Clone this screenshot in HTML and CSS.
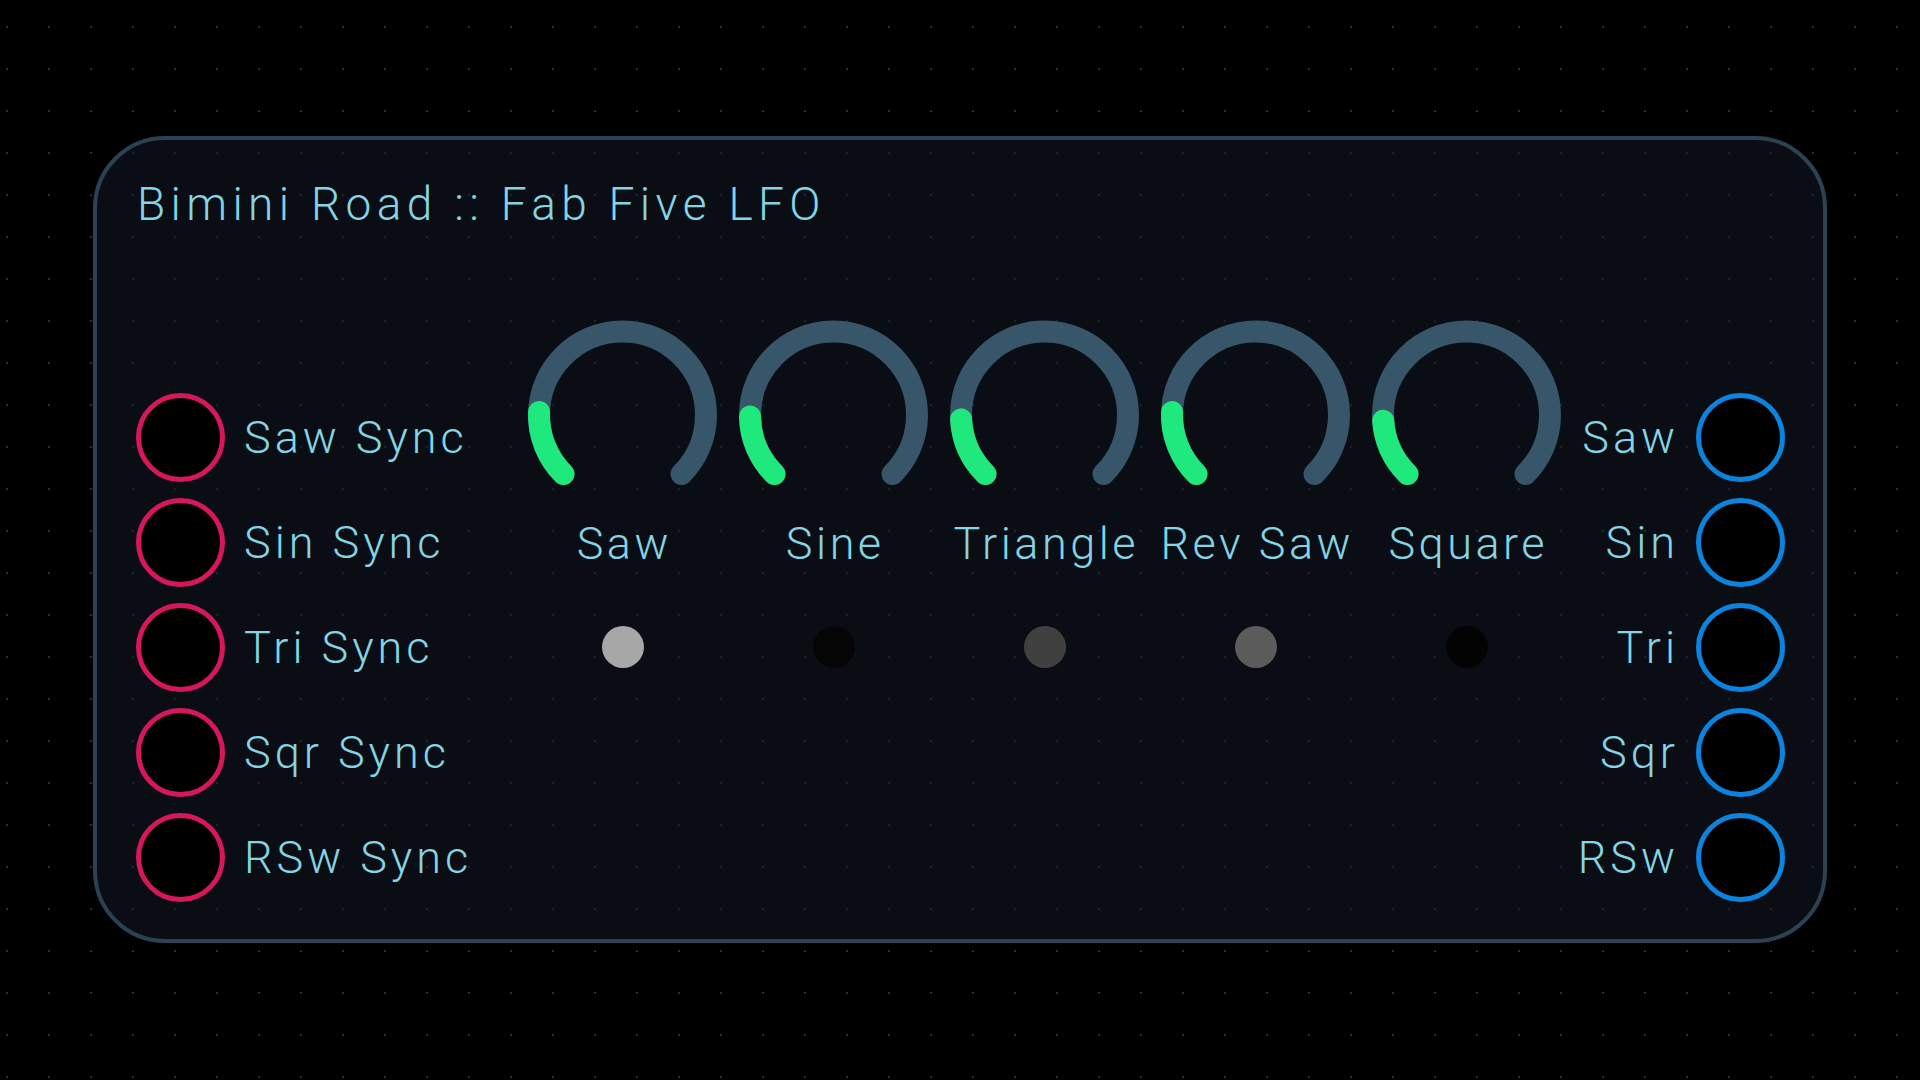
FILE: index.html
```html
<!DOCTYPE html>
<html lang="en">
<head>
<meta charset="utf-8">
<title>Bimini Road :: Fab Five LFO</title>
<link rel="stylesheet" href="styles.css">
</head>
<body>
<div class="stage">
  <div class="panel">
    <h1 class="title">Bimini Road :: Fab Five LFO</h1>
    <div class="body">
      <div class="col col-left">
        <div class="row"><span class="jack jack-in"></span><span class="label">Saw Sync</span></div>
        <div class="row"><span class="jack jack-in"></span><span class="label">Sin Sync</span></div>
        <div class="row"><span class="jack jack-in"></span><span class="label">Tri Sync</span></div>
        <div class="row"><span class="jack jack-in"></span><span class="label">Sqr Sync</span></div>
        <div class="row"><span class="jack jack-in"></span><span class="label">RSw Sync</span></div>
      </div>
      <div class="knobs">
        <div class="knob-col">
          <svg class="knob" viewBox="0 0 211 200" width="211" height="200">
            <path class="track" d="M 46.46 159.04 A 83.5 83.5 0 1 1 164.54 159.04"/>
            <path class="value" d="M 46.46 159.04 A 83.5 83.5 0 0 1 22.05 97.09"/>
          </svg>
          <div class="klabel">Saw</div>
          <div class="led" style="background:#a7a7a7"></div>
        </div>
        <div class="knob-col">
          <svg class="knob" viewBox="0 0 211 200" width="211" height="200">
            <path class="track" d="M 46.46 159.04 A 83.5 83.5 0 1 1 164.54 159.04"/>
            <path class="value" d="M 46.46 159.04 A 83.5 83.5 0 0 1 22.01 101.46"/>
          </svg>
          <div class="klabel">Sine</div>
          <div class="led" style="background:#050505"></div>
        </div>
        <div class="knob-col">
          <svg class="knob" viewBox="0 0 211 200" width="211" height="200">
            <path class="track" d="M 46.46 159.04 A 83.5 83.5 0 1 1 164.54 159.04"/>
            <path class="value" d="M 46.46 159.04 A 83.5 83.5 0 0 1 22.11 104.37"/>
          </svg>
          <div class="klabel">Triangle</div>
          <div class="led" style="background:#404040"></div>
        </div>
        <div class="knob-col">
          <svg class="knob" viewBox="0 0 211 200" width="211" height="200">
            <path class="track" d="M 46.46 159.04 A 83.5 83.5 0 1 1 164.54 159.04"/>
            <path class="value" d="M 46.46 159.04 A 83.5 83.5 0 0 1 22.05 97.09"/>
          </svg>
          <div class="klabel">Rev Saw</div>
          <div class="led" style="background:#5b5b5b"></div>
        </div>
        <div class="knob-col">
          <svg class="knob" viewBox="0 0 211 200" width="211" height="200">
            <path class="track" d="M 46.46 159.04 A 83.5 83.5 0 1 1 164.54 159.04"/>
            <path class="value" d="M 46.46 159.04 A 83.5 83.5 0 0 1 22.2 105.82"/>
          </svg>
          <div class="klabel">Square</div>
          <div class="led" style="background:#030303"></div>
        </div>
      </div>
      <div class="col col-right">
        <div class="row"><span class="label">Saw</span><span class="jack jack-out"></span></div>
        <div class="row"><span class="label">Sin</span><span class="jack jack-out"></span></div>
        <div class="row"><span class="label">Tri</span><span class="jack jack-out"></span></div>
        <div class="row"><span class="label">Sqr</span><span class="jack jack-out"></span></div>
        <div class="row"><span class="label">RSw</span><span class="jack jack-out"></span></div>
      </div>
    </div>
  </div>
</div>
</body>
</html>
```

FILE: styles.css
```css
* {
  box-sizing: border-box;
}

html, body {
  margin: 0;
  padding: 0;
}

body {
  width: 1920px;
  height: 1080px;
  overflow: hidden;
  background-color: #000;
  background-image: radial-gradient(circle at 21px 21px, #1e3140 0, #1e3140 1px, transparent 1.6px);
  background-size: 42px 42px;
  background-position: -14px 6px;
  font-family: Roboto, "Noto Sans", sans-serif;
  font-weight: 300;
  color: #84d4e4;
}

.stage {
  padding-top: 136px;
}

.panel {
  width: 1734px;
  height: 807px;
  margin: 0 auto;
  border: 4px solid #2b4252;
  border-radius: 72px;
  background-color: #0a0e14;
  background-image: radial-gradient(circle at 21px 21px, #18242e 0, #18242e 1px, transparent 1.6px);
  background-size: 42px 42px;
  background-position: -14px 6px;
  background-attachment: fixed;
  padding: 41px 38px 0 39px;
}

.title {
  margin: 0;
  padding-left: 1px;
  font-size: 46px;
  line-height: 46px;
  font-weight: 300;
  letter-spacing: 5.35px;
  white-space: nowrap;
}

.body {
  display: flex;
  align-items: flex-start;
  margin-top: 88px;
}

.col {
  display: flex;
  flex-direction: column;
  padding-top: 70px;
}

.col-left {
  width: 381px;
}

.col-right {
  width: 213px;
  align-items: flex-end;
}

.row {
  height: 105px;
  display: flex;
  align-items: center;
}

.col-left .row {
  gap: 19px;
}

.col-right .row {
  gap: 17px;
}

.label {
  font-size: 45px;
  line-height: 45px;
  letter-spacing: 4px;
  white-space: nowrap;
}

.jack {
  flex: none;
  width: 89px;
  height: 89px;
  border-radius: 50%;
  border: 5px solid;
  background: #000;
}

.jack-in {
  border-color: #d6175c;
}

.jack-out {
  border-color: #0a84df;
}

.knobs {
  width: 1055px;
  display: flex;
}

.knob-col {
  width: 211px;
  display: flex;
  flex-direction: column;
  align-items: center;
}

.knob {
  display: block;
}

.knob path {
  fill: none;
  stroke-width: 22;
  stroke-linecap: round;
}

.knob .track {
  stroke: #37566a;
}

.knob .value {
  stroke: #1fe97d;
}

.klabel {
  margin-top: 6px;
  font-size: 45px;
  line-height: 45px;
  letter-spacing: 3.5px;
  text-indent: 3.5px;
  white-space: nowrap;
}

.led {
  margin-top: 60px;
  width: 42px;
  height: 42px;
  border-radius: 50%;
}
```
